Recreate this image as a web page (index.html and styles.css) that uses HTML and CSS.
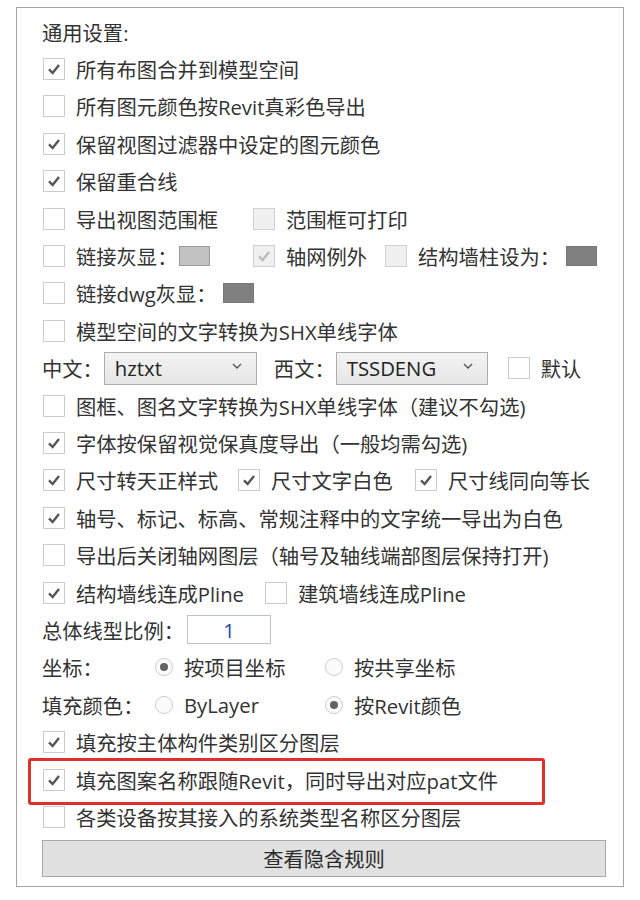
FILE: index.html
```html
<!DOCTYPE html>
<html lang="zh-CN">

<head>
    <meta charset="UTF-8">
    <meta name="viewport" content="width=device-width, initial-scale=1.0">
    <title>导出设置</title>
    <link rel="stylesheet" href="styles.css">
</head>

<body>
    <div class="panel">
        <div class="row"><span class="title">通用设置:</span></div>

        <div class="row">
            <label class="opt"><span class="box on"><svg viewBox="0 0 22 22"><path d="M5.5 11.5 9.5 15.5 16.5 6.5"/></svg></span>所有布图合并到模型空间</label>
        </div>
        <div class="row">
            <label class="opt"><span class="box"></span>所有图元颜色按Revit真彩色导出</label>
        </div>
        <div class="row">
            <label class="opt"><span class="box on"><svg viewBox="0 0 22 22"><path d="M5.5 11.5 9.5 15.5 16.5 6.5"/></svg></span>保留视图过滤器中设定的图元颜色</label>
        </div>
        <div class="row">
            <label class="opt"><span class="box on"><svg viewBox="0 0 22 22"><path d="M5.5 11.5 9.5 15.5 16.5 6.5"/></svg></span>保留重合线</label>
        </div>
        <div class="row">
            <label class="opt col-210"><span class="box"></span>导出视图范围框</label>
            <label class="opt"><span class="box off"></span>范围框可打印</label>
        </div>
        <div class="row">
            <label class="opt col-210"><span class="box"></span>链接灰显：<span class="swatch light"></span></label>
            <label class="opt col-132"><span class="box off on"><svg viewBox="0 0 22 22"><path d="M5.5 11.5 9.5 15.5 16.5 6.5"/></svg></span>轴网例外</label>
            <label class="opt"><span class="box off"></span>结构墙柱设为：<span class="swatch dark"></span></label>
        </div>
        <div class="row">
            <label class="opt"><span class="box"></span>链接dwg灰显：<span class="swatch dark"></span></label>
        </div>
        <div class="row">
            <label class="opt"><span class="box"></span>模型空间的文字转换为SHX单线字体</label>
        </div>

        <!-- 字体选择 -->
        <div class="row">
            <span class="lbl">中文：</span>
            <div class="select sel-cn">hztxt<svg viewBox="0 0 10 6"><path d="M1 1 5 5 9 1"/></svg></div>
            <span class="lbl lbl-en">西文：</span>
            <div class="select sel-en">TSSDENG<svg viewBox="0 0 10 6"><path d="M1 1 5 5 9 1"/></svg></div>
            <label class="opt opt-def"><span class="box"></span>默认</label>
        </div>

        <div class="row">
            <label class="opt"><span class="box"></span>图框、图名文字转换为SHX单线字体（建议不勾选)</label>
        </div>
        <div class="row">
            <label class="opt"><span class="box on"><svg viewBox="0 0 22 22"><path d="M5.5 11.5 9.5 15.5 16.5 6.5"/></svg></span>字体按保留视觉保真度导出（一般均需勾选)</label>
        </div>
        <div class="row">
            <label class="opt col-195"><span class="box on"><svg viewBox="0 0 22 22"><path d="M5.5 11.5 9.5 15.5 16.5 6.5"/></svg></span>尺寸转天正样式</label>
            <label class="opt col-177"><span class="box on"><svg viewBox="0 0 22 22"><path d="M5.5 11.5 9.5 15.5 16.5 6.5"/></svg></span>尺寸文字白色</label>
            <label class="opt"><span class="box on"><svg viewBox="0 0 22 22"><path d="M5.5 11.5 9.5 15.5 16.5 6.5"/></svg></span>尺寸线同向等长</label>
        </div>
        <div class="row">
            <label class="opt"><span class="box on"><svg viewBox="0 0 22 22"><path d="M5.5 11.5 9.5 15.5 16.5 6.5"/></svg></span>轴号、标记、标高、常规注释中的文字统一导出为白色</label>
        </div>
        <div class="row">
            <label class="opt"><span class="box"></span>导出后关闭轴网图层（轴号及轴线端部图层保持打开)</label>
        </div>
        <div class="row">
            <label class="opt col-222"><span class="box on"><svg viewBox="0 0 22 22"><path d="M5.5 11.5 9.5 15.5 16.5 6.5"/></svg></span>结构墙线连成Pline</label>
            <label class="opt"><span class="box"></span>建筑墙线连成Pline</label>
        </div>

        <div class="row">
            <span class="lbl">总体线型比例：</span>
            <div class="num">1</div>
        </div>

        <!-- 单选 -->
        <div class="row">
            <span class="lbl col-113">坐标：</span>
            <label class="opt col-170"><span class="radio on"></span>按项目坐标</label>
            <label class="opt"><span class="radio"></span>按共享坐标</label>
        </div>
        <div class="row">
            <span class="lbl col-113">填充颜色：</span>
            <label class="opt col-170"><span class="radio"></span>ByLayer</label>
            <label class="opt"><span class="radio on"></span>按Revit颜色</label>
        </div>

        <div class="row">
            <label class="opt"><span class="box on"><svg viewBox="0 0 22 22"><path d="M5.5 11.5 9.5 15.5 16.5 6.5"/></svg></span>填充按主体构件类别区分图层</label>
        </div>
        <div class="row marked">
            <label class="opt"><span class="box on"><svg viewBox="0 0 22 22"><path d="M5.5 11.5 9.5 15.5 16.5 6.5"/></svg></span>填充图案名称跟随Revit，同时导出对应pat文件</label>
            <span class="mark"></span>
        </div>
        <div class="row">
            <label class="opt"><span class="box"></span>各类设备按其接入的系统类型名称区分图层</label>
        </div>

        <div class="btn">查看隐含规则</div>
    </div>
</body>

</html>
```

FILE: styles.css
```css
* {
    margin: 0;
    padding: 0;
    box-sizing: border-box;
}

body {
    background-color: #fff;
    font-family: "Open Sans", "Noto Sans CJK SC", sans-serif;
    font-size: 20.3px;
    color: #333;
}

.panel {
    width: 608px;
    height: 880px;
    margin: 7px 0 0 16px;
    border: 1px solid #a4a4a4;
    padding: 5px 16px 0 26px;
}

.row {
    height: 37.4px;
    display: flex;
    align-items: center;
    white-space: nowrap;
}

.title {
    margin-left: -1px;
}

.opt {
    display: flex;
    align-items: center;
}

/* 复选框 */
.box {
    width: 22px;
    height: 22px;
    border: 1px solid #cbcbcb;
    background-color: #fff;
    margin-right: 11px;
    flex-shrink: 0;
}

.box svg {
    display: block;
    width: 20px;
    height: 20px;
}

.box path {
    fill: none;
    stroke: #555;
    stroke-width: 2.6;
}

.box.off {
    background-color: #f0f0f0;
    border-color: #d2d2d2;
}

.box.off path {
    stroke: #bcbcbc;
}

/* 单选 */
.radio {
    width: 18px;
    height: 18px;
    border-radius: 50%;
    border: 1px solid #cdcdcd;
    background-color: #fbfbfb;
    margin-right: 11px;
    display: flex;
    align-items: center;
    justify-content: center;
}

.radio.on::after {
    content: "";
    width: 8px;
    height: 8px;
    border-radius: 50%;
    background-color: #646464;
}

.col-113 { width: 113px; }
.col-132 { width: 132px; }
.col-170 { width: 170px; }
.col-177 { width: 177px; }
.col-195 { width: 195px; }
.col-210 { width: 210px; }
.col-222 { width: 222px; }

.swatch {
    width: 31px;
    height: 20px;
    margin-left: 2px;
}

.swatch.light {
    background-color: #c2c2c2;
    border: 1px solid #9a9a9a;
}

.swatch.dark {
    background-color: #808080;
    border: 1px solid #777;
    margin-left: 6px;
}

.lbl {
    margin-left: -1px;
}

.lbl-en {
    margin-left: 17px;
}

/* 下拉框 */
.select {
    height: 33px;
    display: flex;
    align-items: center;
    justify-content: space-between;
    border: 1px solid #acacac;
    background: linear-gradient(#f3f3f3, #e6e6e6);
    padding: 0 14px 0 10px;
    color: #222;
}

.select svg {
    width: 10px;
    height: 6px;
    margin-top: -4px;
}

.select path {
    fill: none;
    stroke: #555;
    stroke-width: 1.4;
}

.sel-cn {
    width: 153px;
    margin-left: 1px;
}

.sel-en {
    width: 152px;
    margin-left: 1px;
}

.opt-def {
    margin-left: 20px;
}

.num {
    width: 84px;
    height: 29px;
    margin-left: 3px;
    border: 1px solid #bdc3cc;
    display: flex;
    align-items: center;
    justify-content: center;
    color: #2446b4;
}

.marked {
    position: relative;
}

.mark {
    position: absolute;
    left: -15px;
    top: -3px;
    width: 517px;
    height: 47px;
    border: 3px solid #e0302e;
    border-radius: 3px;
}

.btn {
    margin: 4px 0 0 -1px;
    width: 564px;
    height: 37px;
    border: 1px solid #a8a8a8;
    background-color: #e1e1e1;
    display: flex;
    align-items: center;
    justify-content: center;
    color: #2a2a2a;
}
```
